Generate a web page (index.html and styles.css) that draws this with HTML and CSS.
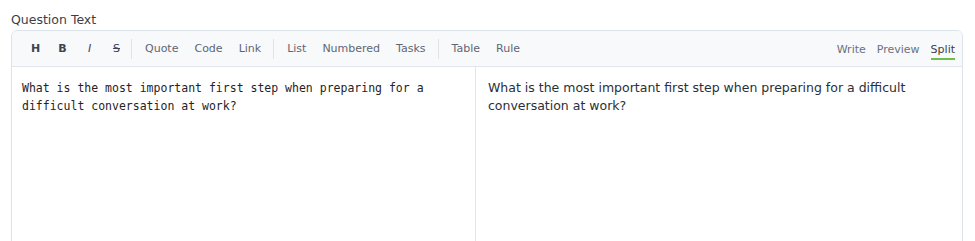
FILE: index.html
```html
<!DOCTYPE html>
<html lang="en">
  <head>
    <meta charset="UTF-8" />
    <meta name="viewport" content="width=device-width, initial-scale=1.0" />
    <title>Question Text</title>
    <link rel="stylesheet" href="styles.css">
  </head>
  <body>
    <div class="field">
      <label class="field-label">Question Text</label>
      <div class="md-editor">
        <div class="toolbar">
          <div class="tool-group fmt-group">
            <button class="tool fmt">H</button>
            <button class="tool fmt">B</button>
            <button class="tool fmt italic">I</button>
            <button class="tool fmt strike">S</button>
          </div>
          <span class="sep first"></span>
          <div class="tool-group">
            <button class="tool">Quote</button>
            <button class="tool">Code</button>
            <button class="tool">Link</button>
          </div>
          <span class="sep"></span>
          <div class="tool-group">
            <button class="tool">List</button>
            <button class="tool">Numbered</button>
            <button class="tool">Tasks</button>
          </div>
          <span class="sep"></span>
          <div class="tool-group">
            <button class="tool">Table</button>
            <button class="tool">Rule</button>
          </div>
          <div class="modes">
            <button class="mode">Write</button>
            <button class="mode">Preview</button>
            <button class="mode active">Split</button>
          </div>
        </div>
        <div class="panes">
          <textarea class="source">What is the most important first step when preparing for a difficult conversation at work?</textarea>
          <div class="preview">
            <p>What is the most important first step when preparing for a difficult conversation at work?</p>
          </div>
        </div>
      </div>
    </div>
  </body>
</html>
```

FILE: styles.css
```css
body {
  margin: 0;
  padding: 0;
  background: #fff;
  font-family: "DejaVu Sans", sans-serif;
}
.field {
  padding: 11px 12px 0 11px;
}
.field-label {
  display: block;
  font-size: 12.5px;
  color: #3a3f47;
  line-height: 18px;
  margin-bottom: 1px;
}
.md-editor {
  border: 1px solid #dde3ea;
  border-radius: 6px;
  overflow: hidden;
  background: #fff;
}
.toolbar {
  display: flex;
  align-items: center;
  height: 35px;
  padding: 1px 7px 0 10px;
  box-sizing: border-box;
  height: 36px;
  background: #f8f9fb;
  border-bottom: 1px solid #e1e6ec;
}
.tool-group {
  display: flex;
  align-items: center;
}
button {
  font-family: inherit;
  border: none;
  background: none;
  cursor: pointer;
  padding: 0;
}
.tool {
  font-size: 11px;
  color: #5f6673;
  padding: 0 8px;
  line-height: 18px;
}
.tool.fmt {
  font-weight: bold;
  color: #3d4350;
  width: 27px;
  padding: 0;
  font-size: 11px;
}
.tool.italic {
  font-style: italic;
  font-weight: normal;
}
.tool.strike {
  text-decoration: line-through;
  font-weight: normal;
}
.sep {
  width: 1px;
  height: 20px;
  background: #dfe3e8;
  margin: 0 5px 0 4px;
}
.sep.first {
  margin-left: 1px;
}
.modes {
  margin-left: auto;
  display: flex;
  align-items: center;
  gap: 11px;
}
.mode {
  font-size: 11px;
  color: #6a7180;
  line-height: 16px;
  border-bottom: 2px solid transparent;
  margin-top: 3px;
}
.mode.active {
  color: #3a3f47;
  border-bottom-color: #6cc04a;
}
.panes {
  display: grid;
  grid-template-columns: 464px 1fr;
  height: 200px;
}
.source {
  border: none;
  border-right: 1px solid #e1e6ec;
  resize: none;
  outline: none;
  margin: 0;
  padding: 12px 10px;
  font-family: "DejaVu Sans Mono", monospace;
  font-size: 11.5px;
  line-height: 18px;
  color: #1f2328;
}
.preview {
  padding: 12px 12px;
}
.preview p {
  margin: 0;
  font-size: 12.5px;
  line-height: 18px;
  color: #2b2f36;
}
```
